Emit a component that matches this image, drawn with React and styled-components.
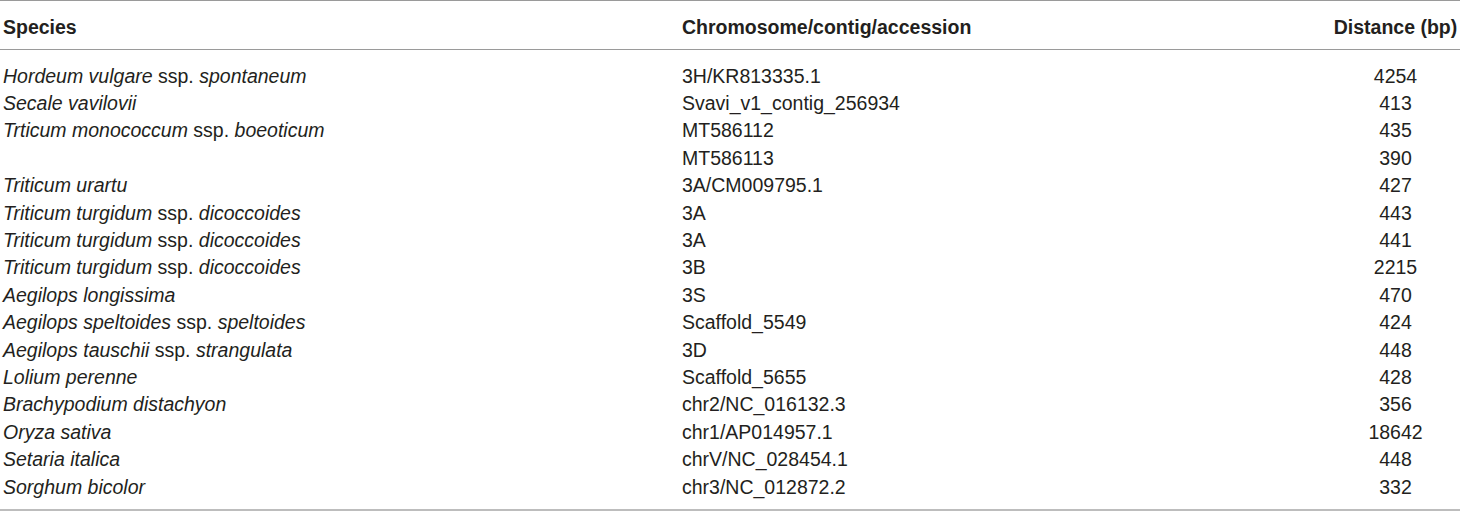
import React from "react";
import styled, { createGlobalStyle } from "styled-components";

const rows = [
  { sp: [["Hordeum vulgare", true], [" ssp. ", false], ["spontaneum", true]], chr: "3H/KR813335.1", dist: "4254" },
  { sp: [["Secale vavilovii", true]], chr: "Svavi_v1_contig_256934", dist: "413" },
  { sp: [["Trticum monococcum", true], [" ssp. ", false], ["boeoticum", true]], chr: "MT586112", dist: "435" },
  { sp: [], chr: "MT586113", dist: "390" },
  { sp: [["Triticum urartu", true]], chr: "3A/CM009795.1", dist: "427" },
  { sp: [["Triticum turgidum", true], [" ssp. ", false], ["dicoccoides", true]], chr: "3A", dist: "443" },
  { sp: [["Triticum turgidum", true], [" ssp. ", false], ["dicoccoides", true]], chr: "3A", dist: "441" },
  { sp: [["Triticum turgidum", true], [" ssp. ", false], ["dicoccoides", true]], chr: "3B", dist: "2215" },
  { sp: [["Aegilops longissima", true]], chr: "3S", dist: "470" },
  { sp: [["Aegilops speltoides", true], [" ssp. ", false], ["speltoides", true]], chr: "Scaffold_5549", dist: "424" },
  { sp: [["Aegilops tauschii", true], [" ssp. ", false], ["strangulata", true]], chr: "3D", dist: "448" },
  { sp: [["Lolium perenne", true]], chr: "Scaffold_5655", dist: "428" },
  { sp: [["Brachypodium distachyon", true]], chr: "chr2/NC_016132.3", dist: "356" },
  { sp: [["Oryza sativa", true]], chr: "chr1/AP014957.1", dist: "18642" },
  { sp: [["Setaria italica", true]], chr: "chrV/NC_028454.1", dist: "448" },
  { sp: [["Sorghum bicolor", true]], chr: "chr3/NC_012872.2", dist: "332" },
];

const App = () => {
  return (
    <>
      <GlobalStyle />
      <Table>
        <Header>
          <Cell bold>Species</Cell>
          <Cell bold>Chromosome/contig/accession</Cell>
          <Cell bold center>Distance (bp)</Cell>
        </Header>
        <Body>
          {rows.map((r, i) => (
            <Row key={i}>
              <Cell>
                {r.sp.map(([t, it], j) =>
                  it ? <Em key={j}>{t}</Em> : <span key={j}>{t}</span>
                )}
              </Cell>
              <Cell>{r.chr}</Cell>
              <Cell center>{r.dist}</Cell>
            </Row>
          ))}
        </Body>
      </Table>
    </>
  );
};

export default App;

const GlobalStyle = createGlobalStyle`
  body {
    margin: 0;
    background: #fff;
    font-family: "Liberation Sans", Arial, sans-serif;
    color: #231f20;
  }
`;

const Table = styled.div`
  width: 1460px;
  border-top: 1px solid #9a9a9a;
  border-bottom: 2px solid #bdbdbd;
`;

const cols = `
  display: grid;
  grid-template-columns: 682px 649px 129px;
`;

const Header = styled.div`
  ${cols}
  height: 49px;
  align-items: center;
  padding-top: 3px;
  box-sizing: border-box;
  border-bottom: 1px solid #9a9a9a;
`;

const Body = styled.div`
  padding: 12px 0 9px;
`;

const Row = styled.div`
  ${cols}
  height: 27.4px;
  align-items: center;
`;

const Cell = styled.div`
  font-size: 19.5px;
  line-height: 24px;
  white-space: nowrap;
  font-weight: ${(p) => (p.bold ? 700 : 400)};
  text-align: ${(p) => (p.center ? "center" : "left")};
  &:first-child {
    padding-left: 3px;
  }
`;

const Em = styled.i`
  font-style: italic;
`;
